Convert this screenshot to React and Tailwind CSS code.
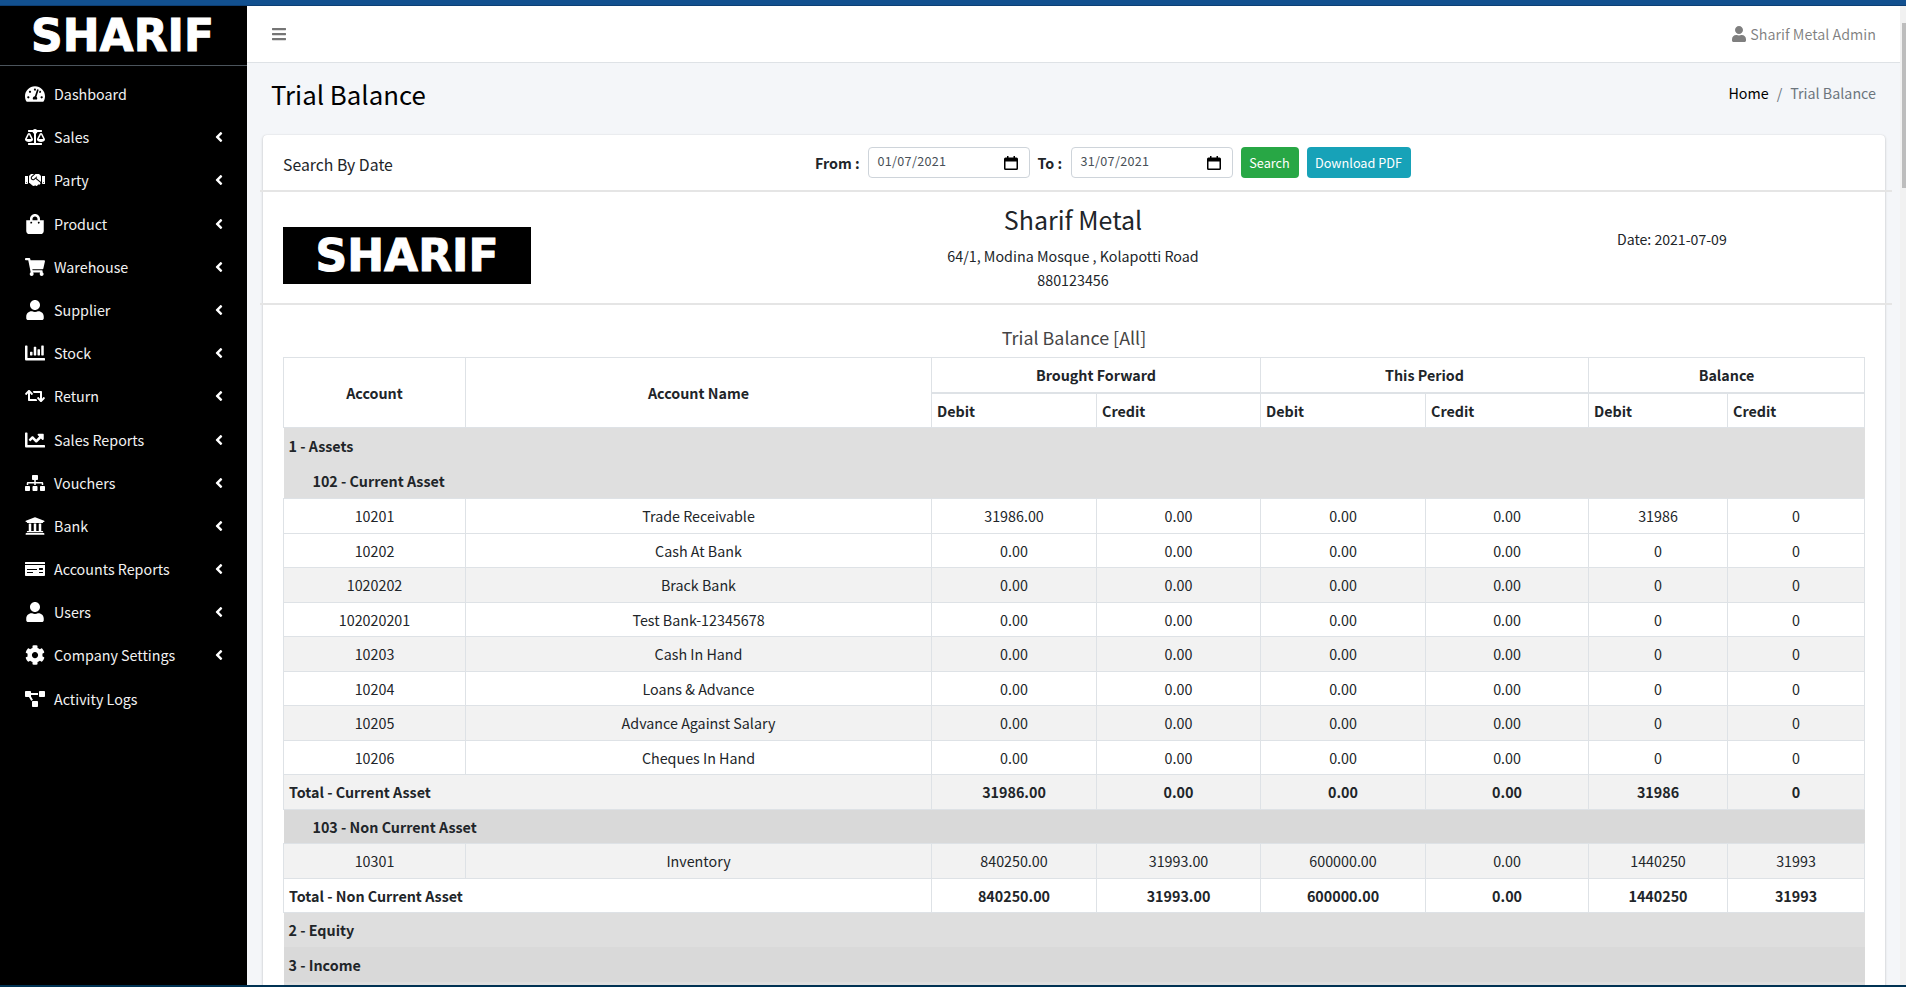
import {
  FaTachometerAlt, FaBalanceScale, FaHandshake, FaShoppingBag, FaShoppingCart, FaUser, FaChartBar,
  FaRetweet, FaChartLine, FaSitemap, FaUniversity, FaMoneyCheck, FaCog, FaProjectDiagram, FaAngleLeft, FaBars,
} from 'react-icons/fa';

const navItems = [
  { label: 'Dashboard', icon: FaTachometerAlt },
  { label: 'Sales', icon: FaBalanceScale, sub: true },
  { label: 'Party', icon: FaHandshake, sub: true },
  { label: 'Product', icon: FaShoppingBag, sub: true },
  { label: 'Warehouse', icon: FaShoppingCart, sub: true },
  { label: 'Supplier', icon: FaUser, sub: true },
  { label: 'Stock', icon: FaChartBar, sub: true },
  { label: 'Return', icon: FaRetweet, sub: true },
  { label: 'Sales Reports', icon: FaChartLine, sub: true },
  { label: 'Vouchers', icon: FaSitemap, sub: true },
  { label: 'Bank', icon: FaUniversity, sub: true },
  { label: 'Accounts Reports', icon: FaMoneyCheck, sub: true },
  { label: 'Users', icon: FaUser, sub: true },
  { label: 'Company Settings', icon: FaCog, sub: true },
  { label: 'Activity Logs', icon: FaProjectDiagram },
];

const zeros = ['0.00', '0.00', '0.00', '0.00', '0', '0'];

const rows = [
  { type: 'group', label: '1 - Assets', bg: 'bg-[#dfdfdf]', tall: true },
  { type: 'group', label: '102 - Current Asset', bg: 'bg-[#dfdfdf]', indent: true, tall: true },
  { type: 'row', code: '10201', name: 'Trade Receivable', values: ['31986.00', '0.00', '0.00', '0.00', '31986', '0'] },
  { type: 'row', code: '10202', name: 'Cash At Bank', values: zeros },
  { type: 'row', code: '1020202', name: 'Brack Bank', values: zeros, gray: true },
  { type: 'row', code: '102020201', name: 'Test Bank-12345678', values: zeros },
  { type: 'row', code: '10203', name: 'Cash In Hand', values: zeros, gray: true },
  { type: 'row', code: '10204', name: 'Loans & Advance', values: zeros },
  { type: 'row', code: '10205', name: 'Advance Against Salary', values: zeros, gray: true },
  { type: 'row', code: '10206', name: 'Cheques In Hand', values: zeros },
  { type: 'total', label: 'Total - Current Asset', values: ['31986.00', '0.00', '0.00', '0.00', '31986', '0'], gray: true },
  { type: 'group', label: '103 - Non Current Asset', bg: 'bg-[#d9d9d9]', indent: true },
  { type: 'row', code: '10301', name: 'Inventory', values: ['840250.00', '31993.00', '600000.00', '0.00', '1440250', '31993'], gray: true },
  { type: 'total', label: 'Total - Non Current Asset', values: ['840250.00', '31993.00', '600000.00', '0.00', '1440250', '31993'] },
  { type: 'group', label: '2 - Equity', bg: 'bg-[#dedede]' },
  { type: 'group', label: '3 - Income', bg: 'bg-[#d9d9d9]' },
];

const Logo = () => (
  <span className="font-['DejaVu_Sans',sans-serif] font-bold text-[44px] leading-none text-white [-webkit-text-stroke:1px_white]">
    SHARIF
  </span>
);

const CalendarIcon = () => (
  <svg width="14" height="14" viewBox="0 0 14 14" className="shrink-0">
    <path d="M3 0v1.5H1.5A1.5 1.5 0 0 0 0 3v9.5A1.5 1.5 0 0 0 1.5 14h11a1.5 1.5 0 0 0 1.5-1.5V3a1.5 1.5 0 0 0-1.5-1.5H11V0H9.5v1.5h-5V0H3zM1.5 5.5h11v7h-11v-7z" fill="#000" />
  </svg>
);

const DateField = ({ value }) => (
  <div className="flex items-center justify-between w-[162px] h-[31px] pl-[9px] pr-[11px] bg-white border border-[#ced4da] rounded-[4px] text-[12.6px] text-[#495057]">
    <span className="tracking-[0.3px] -mt-[2px]">{value}</span>
    <CalendarIcon />
  </div>
);

const cellBorder = 'border border-[#dee2e6]';

const TableRow = ({ row }) => {
  if (row.type === 'group') {
    return (
      <tr className={`${row.bg} ${row.tall ? 'h-[35.5px]' : 'h-[34.5px]'}`}>
        <td colSpan={8} className={`font-bold py-0 pr-[5px] ${row.indent ? 'pl-[29px]' : 'pl-[5px]'}`}>{row.label}</td>
      </tr>
    );
  }
  const bg = row.gray ? 'bg-[#f2f2f2]' : 'bg-white';
  if (row.type === 'total') {
    return (
      <tr className={`${bg} h-[34.5px] font-bold`}>
        <td colSpan={2} className={`${cellBorder} py-0 px-[5px]`}>{row.label}</td>
        {row.values.map((v, i) => (
          <td key={i} className={`${cellBorder} py-0 text-center`}>{v}</td>
        ))}
      </tr>
    );
  }
  return (
    <tr className={`${bg} h-[34.5px]`}>
      <td className={`${cellBorder} py-0 text-center`}>{row.code}</td>
      <td className={`${cellBorder} py-0 text-center`}>{row.name}</td>
      {row.values.map((v, i) => (
        <td key={i} className={`${cellBorder} py-0 text-center`}>{v}</td>
      ))}
    </tr>
  );
};

export default function App() {
  return (
    <div className="h-screen w-full overflow-hidden flex flex-col font-['Noto_Sans_CJK_SC','Noto_Sans',sans-serif] text-[#212529] text-[14.3px]">
      <div className="h-[6px] shrink-0 bg-[#12508f] border-b border-[#0d3f75]" />

      <div className="flex flex-1 min-h-0">
        {/* Sidebar */}
        <aside className="w-[247px] shrink-0 bg-black text-[#f2f2f2]">
          <div className="h-[60px] border-b border-[#4b545c] flex items-center justify-center pr-[2px]">
            <Logo />
          </div>
          <nav className="pt-[8px] px-[8px]">
            {navItems.map(({ label, icon: Icon, sub }) => (
              <div key={label} className="flex items-center h-[40px] mb-[3.2px] pl-[15px] pr-[12px]">
                <span className="w-[31px] shrink-0 flex justify-center -ml-[4px] mr-[4px] text-white">
                  <Icon size={20} />
                </span>
                <span className="flex-1 leading-6">{label}</span>
                {sub && <FaAngleLeft size={16} className="text-white" />}
              </div>
            ))}
          </nav>
        </aside>

        {/* Main */}
        <main className="flex-1 min-w-0 bg-[#f4f6f9] overflow-hidden">
          <header className="h-[57px] bg-white border-b border-[#dee2e6] flex items-center justify-between pl-[24px] pr-[24px]">
            <FaBars size={16} className="text-[#757575]" />
            <div className="flex items-center gap-[3px] text-black/50">
              <FaUser size={16} />
              <span>Sharif Metal Admin</span>
            </div>
          </header>

          <div className="flex items-center justify-between h-[72px] pl-[24px] pr-[24px] pb-[10px]">
            <h1 className="text-[25.8px] leading-tight text-black font-normal">Trial Balance</h1>
            <div className="flex items-center mb-[3px]">
              <span className="text-black">Home</span>
              <span className="text-[#6c757d] px-[8px]">/</span>
              <span className="text-[#6c757d]">Trial Balance</span>
            </div>
          </div>

          <section className="ml-[16px] mr-[15px] bg-white rounded-[4px] shadow-[0_0_1px_rgba(0,0,0,0.125),0_1px_3px_rgba(0,0,0,0.2)]">
            <div className="flex items-center h-[57px] pl-[20px] border-b-2 border-[#e5e5e5] -ml-[3px] -mr-[7px]">
              <span className="w-[535px] shrink-0 text-[15.8px] text-[#212529] pl-[3px] mt-[4px]">Search By Date</span>
              <div className="flex items-center">
                <b className="w-[52.5px] shrink-0">From :</b>
                <DateField value="01/07/2021" />
                <b className="w-[41px] shrink-0 pl-[8px]">To :</b>
                <DateField value="31/07/2021" />
                <button className="ml-[8px] h-[31px] w-[58px] rounded-[4px] bg-[#28a745] text-white text-[12.7px]">Search</button>
                <button className="ml-[8px] h-[31px] w-[104px] rounded-[4px] bg-[#17a2b8] text-white text-[12.7px]">Download PDF</button>
              </div>
            </div>

            <div className="flex items-start h-[113px] pl-[20px] border-b-2 border-[#e5e5e5] -ml-[3px] -mr-[7px]">
              <div className="w-[248px] h-[57px] mt-[35px] ml-[3px] bg-black flex items-center justify-center shrink-0">
                <Logo />
              </div>
              <div className="w-[1084px] shrink-0 text-center pt-[9px]">
                <div className="text-[25px] leading-[36px]">Sharif Metal</div>
                <div className="mt-[7px] leading-6">64/1, Modina Mosque , Kolapotti Road</div>
                <div className="leading-6">880123456</div>
              </div>
              <div className="ml-[2px] mt-[35px] text-[14.1px] leading-6">Date: 2021-07-09</div>
            </div>

            <div className="px-[20px] pt-[18px]">
              <div className="text-center text-[17.9px] leading-[28px] text-[#444] mb-[6px]">Trial Balance [All]</div>
              <table className="table-fixed border-collapse w-[1581px]">
                <colgroup>
                  <col className="w-[182px]" />
                  <col className="w-[466px]" />
                  <col className="w-[165px]" />
                  <col className="w-[164px]" />
                  <col className="w-[165px]" />
                  <col className="w-[163px]" />
                  <col className="w-[139px]" />
                  <col className="w-[137px]" />
                </colgroup>
                <thead className="font-bold">
                  <tr className="h-[35px]">
                    <th rowSpan={2} className={`${cellBorder} text-center`}>Account</th>
                    <th rowSpan={2} className={`${cellBorder} text-center`}>Account Name</th>
                    <th colSpan={2} className={`${cellBorder} border-b-2 text-center`}>Brought Forward</th>
                    <th colSpan={2} className={`${cellBorder} border-b-2 text-center`}>This Period</th>
                    <th colSpan={2} className={`${cellBorder} border-b-2 text-center`}>Balance</th>
                  </tr>
                  <tr className="h-[35px]">
                    {['Debit', 'Credit', 'Debit', 'Credit', 'Debit', 'Credit'].map((h, i) => (
                      <th key={i} className={`${cellBorder} text-left px-[5px]`}>{h}</th>
                    ))}
                  </tr>
                </thead>
                <tbody>
                  {rows.map((row, i) => (
                    <TableRow key={i} row={row} />
                  ))}
                  <tr className="bg-[#dedede] h-[34.5px]"><td colSpan={8} /></tr>
                </tbody>
              </table>
            </div>
          </section>
        </main>

        {/* Scrollbar */}
        <div className="w-[6px] shrink-0 bg-[#f1f1f1] pt-[17px] pl-[2px]">
          <div className="h-[165px] bg-[#bdbdbd]" />
        </div>
      </div>

      <div className="h-[2px] shrink-0 bg-[#003253]" />
    </div>
  );
}
